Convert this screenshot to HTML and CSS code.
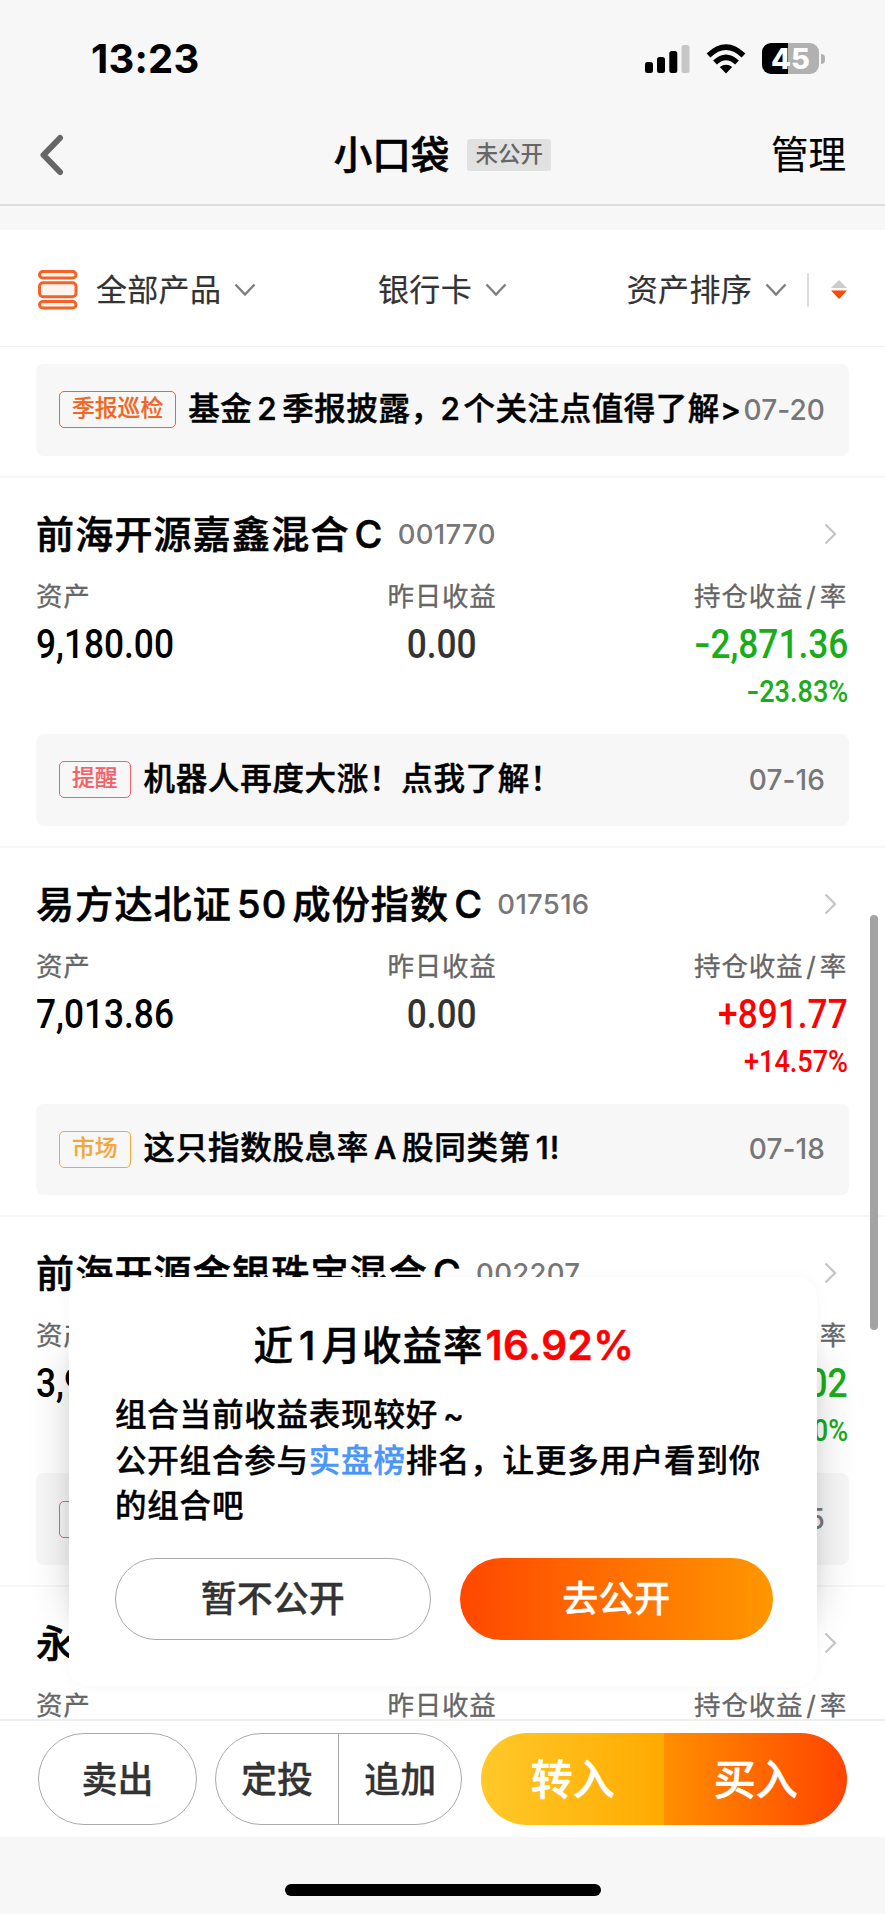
FILE: index.html
```html
<!DOCTYPE html>
<html lang="zh-CN">
<head>
<meta charset="utf-8">
<title>小口袋</title>
<link rel="stylesheet" href="styles.css">
</head>
<body>
<div class="screen">
  <header class="status">
    <span class="clock">13:23</span>
    <div class="status-icons">
      <svg class="signal" width="45" height="30" viewBox="0 0 45 30"><rect x="0" y="18" width="8" height="11" rx="2.5"/><rect x="12" y="13" width="8" height="16" rx="2.5"/><rect x="24.300" y="7" width="8" height="22" rx="2.5"/><rect x="36.500" y="1" width="8" height="28" rx="2.5" fill="#c6c6c6"/></svg>
      <svg class="wifi" width="40" height="30" viewBox="0 0 40 30" fill="none" stroke="#000"><path d="M2.500 11.500Q20-5.200 37.500 11.500" stroke-width="5.500"/><path d="M9 18.600Q20 8.200 31 18.600" stroke-width="5.500"/><path d="M20 29.500L13.800 22.900Q20 18.500 26.200 22.900Z" fill="#000" stroke="none"/></svg>
      <div class="battery"><span class="battery-text">45</span></div>
      <span class="battery-tip"></span>
    </div>
  </header>
  <nav class="nav">
    <svg class="back" width="24" height="42" viewBox="0 0 24 42"><path d="M21 4L4.500 21L21 38" fill="none" stroke="#666" stroke-width="6" stroke-linecap="round" stroke-linejoin="round"/></svg>
    <div class="nav-title"><span class="nav-name">小口袋</span><span class="nav-badge">未公开</span></div>
    <span class="manage">管理</span>
  </nav>
  <div class="filters">
    <div class="filter f-left">
      <svg width="40" height="40" viewBox="0 0 40 40" fill="#fff5ef" stroke="#f4622a" stroke-width="3"><rect x="1.500" y="1.500" width="36.500" height="6.500" rx="3.200"/><rect x="1.500" y="12.700" width="36.500" height="14" rx="3.500"/><rect x="1.500" y="31.500" width="36.500" height="6.500" rx="3.200"/></svg>
      <span>全部产品</span>
      <svg class="caret" width="22" height="14" viewBox="0 0 22 14"><path d="M1.500 1.500L11 11.500L20.500 1.500"/></svg>
    </div>
    <div class="filter f-mid">
      <span>银行卡</span>
      <svg class="caret" width="22" height="14" viewBox="0 0 22 14"><path d="M1.500 1.500L11 11.500L20.500 1.500"/></svg>
    </div>
    <div class="filter f-right">
      <span>资产排序</span>
      <svg class="caret" width="22" height="14" viewBox="0 0 22 14"><path d="M1.500 1.500L11 11.500L20.500 1.500"/></svg>
      <i class="bar"></i>
      <svg width="16" height="19" viewBox="0 0 16 19"><path d="M8 0L16 8H0Z" fill="#ccc"/><path d="M8 19L16 10.500H0Z" fill="#ff4800"/></svg>
    </div>
  </div>

  <main class="list">
    <section class="lead">
      <div class="notice"><span class="tag orange">季报巡检</span><p class="msg tight">基金<b class="n">2</b>季报披露，<b class="n first">2</b>个关注点值得了解&gt;</p><time>07-20</time></div>
    </section>

    <section class="fund">
      <div class="head"><h2>前海开源嘉鑫混合<b class="n end">C</b></h2><span class="code">001770</span><svg class="go" width="13" height="22" viewBox="0 0 13 22"><path d="M1.500 1.500L11 11L1.500 20.500"/></svg></div>
      <div class="cols">
        <div class="col"><label>资产</label><strong>9,180.00</strong></div>
        <div class="col c"><label>昨日收益</label><strong class="dim">0.00</strong></div>
        <div class="col r green"><label>持仓收益<i>/</i>率</label><strong><i>-</i>2,871.36</strong><em><i>-</i>23.83%</em></div>
      </div>
      <div class="notice"><span class="tag red">提醒</span><p class="msg">机器人再度大涨！点我了解！</p><time>07-16</time></div>
    </section>

    <section class="fund">
      <div class="head"><h2>易方达北证<b class="n">50</b>成份指数<b class="n end">C</b></h2><span class="code">017516</span><svg class="go" width="13" height="22" viewBox="0 0 13 22"><path d="M1.500 1.500L11 11L1.500 20.500"/></svg></div>
      <div class="cols">
        <div class="col"><label>资产</label><strong>7,013.86</strong></div>
        <div class="col c"><label>昨日收益</label><strong class="dim">0.00</strong></div>
        <div class="col r up"><label>持仓收益<i>/</i>率</label><strong>+891.77</strong><em>+14.57%</em></div>
      </div>
      <div class="notice"><span class="tag amber">市场</span><p class="msg">这只指数股息率<b class="n">A</b>股同类第<b class="n end">1</b>!</p><time>07-18</time></div>
    </section>

    <section class="fund">
      <div class="head"><h2>前海开源金银珠宝混合<b class="n end">C</b></h2><span class="code">002207</span><svg class="go" width="13" height="22" viewBox="0 0 13 22"><path d="M1.500 1.500L11 11L1.500 20.500"/></svg></div>
      <div class="cols">
        <div class="col"><label>资产</label><strong>3,9</strong></div>
        <div class="col c"></div>
        <div class="col r green"><label>率</label><strong>02</strong><em>0%</em></div>
      </div>
      <div class="notice"><span class="tag red blank"></span><p class="msg"></p><time>5</time></div>
    </section>

    <section class="fund">
      <div class="head"><h2>永</h2><svg class="go" width="13" height="22" viewBox="0 0 13 22"><path d="M1.500 1.500L11 11L1.500 20.500"/></svg></div>
      <div class="cols">
        <div class="col"><label>资产</label></div>
        <div class="col c"><label>昨日收益</label></div>
        <div class="col r"><label>持仓收益<i>/</i>率</label></div>
      </div>
    </section>
  </main>

  <footer class="actions">
    <button class="pill sell">卖出</button>
    <div class="pill pair"><button>定投</button><button>追加</button></div>
    <div class="pill trade"><button class="in">转入</button><button class="buy">买入</button></div>
  </footer>
  <div class="home"><i></i></div>

  <i class="scrollbar"></i>
  <i class="glow"></i>
  <aside class="dialog">
    <h3>近<b class="n">1</b>月收益率<span>16.92%</span></h3>
    <p>组合当前收益表现较好<b class="n end">~</b><br>公开组合参与<a>实盘榜</a>排名，让更多用户看到你的组合吧</p>
    <div class="choices"><button class="later">暂不公开</button><button class="open">去公开</button></div>
  </aside>
</div>
</body>
</html>
```
FILE: styles.css
```css
* { box-sizing: border-box; margin: 0; padding: 0; }
body { width: 885px; height: 1914px; overflow: hidden; background: #f7f7f7; font-family: Inter, "Noto Sans CJK SC", sans-serif; color: #000; }
button { border: 0; background: none; font: inherit; color: inherit; }
i, em { font-style: normal; }
.screen { position: relative; width: 885px; height: 1914px; display: flex; flex-direction: column; overflow: hidden; }

.status { height: 117px; flex: none; display: flex; justify-content: space-between; align-items: center; padding: 0 60px 0 91px; }
.clock { font-size: 40px; font-weight: 700; letter-spacing: .2px; }
.status-icons { display: flex; align-items: center; }
.wifi { margin-left: 16px; }
.battery { width: 57px; height: 31px; margin-left: 16px; border-radius: 9px; background: linear-gradient(90deg, #000 45%, #b1b1b1 45%); display: flex; align-items: center; justify-content: center; }
.battery-text { color: #fff; font-size: 29px; font-weight: 800; line-height: 31px; }
.battery-tip { width: 4px; height: 10px; margin-left: 2px; border-radius: 0 5px 5px 0; background: #b1b1b1; }

.nav { height: 89px; flex: none; display: grid; grid-template-columns: 150px 1fr 150px; align-items: center; padding: 0 39px 11px; border-bottom: 2px solid #dcdcdc; }
.nav-title { display: flex; justify-content: center; align-items: center; gap: 18px; }
.nav-name { font-size: 38.500px; font-weight: 500; line-height: 50px; -webkit-text-stroke: .6px; }
.nav-badge { width: 84px; height: 32px; border-radius: 3px; background: #e1e1e1; color: #666; font-size: 22.500px; font-weight: 500; line-height: 30px; text-align: center; }
.manage { justify-self: end; font-size: 37.500px; line-height: 50px; -webkit-text-stroke: .2px; }

.filters { flex: none; height: 117px; margin-top: 24px; background: #fff; border-bottom: 1px solid #f2f2f2; display: flex; padding: 3px 38px 0; align-items: center; justify-content: space-between; }
.filter { display: flex; align-items: center; font-size: 31px; color: #333; line-height: 40px; letter-spacing: .3px; }
.f-left span { margin-left: 18px; }
.f-mid { margin-left: 2px; }
.filter span { -webkit-text-stroke: .2px; }
.caret { margin-left: 13px; }
.caret path { fill: none; stroke: #808080; stroke-width: 2.500; }
.bar { width: 2px; height: 34px; background: #ddd; margin: 0 22px 0 20px; }

.list { flex: none; height: 1372px; overflow: hidden; background: #fff; }
.lead { height: 131px; padding: 17px 36px 0; border-bottom: 2px solid #f7f7f7; }
.notice { height: 91.500px; border-radius: 8px; background: #f7f7f7; display: flex; align-items: center; padding: 0 24px 0 23px; }
.tag { height: 37px; border: 1.500px solid; border-radius: 5px; padding: 0 12px; font-size: 22.800px; line-height: 32px; font-weight: 500; flex: none; -webkit-text-stroke: .2px; }
.orange { color: #f26522; }
.red { color: #f0616a; }
.amber { color: #f2a73b; }
.blank { width: 72px; }
.msg { margin-left: 13px; flex: 1; font-size: 31.500px; font-weight: 500; line-height: 44px; letter-spacing: .7px; white-space: nowrap; padding-bottom: 2px; -webkit-text-stroke: .5px; }
.msg.tight { letter-spacing: .55px; min-width: 0; margin-left: 12px; }
.notice time { font-size: 28px; font-weight: 500; color: #777; letter-spacing: .1px; white-space: nowrap; }
.n { font-weight: inherit; margin: 0 5px; }
.n.end { margin-right: 0; }
.n.first { margin-right: 3px; margin-left: -2px; }

.fund { height: 369.660px; padding: 31px 36px 0; border-bottom: 2px solid #f7f7f7; display: flex; flex-direction: column; }
.head { height: 50px; display: flex; align-items: center; }
.head h2 { font-size: 38px; font-weight: 500; letter-spacing: 1.200px; line-height: 50px; white-space: nowrap; -webkit-text-stroke: .6px; }
.code { margin-left: 14px; font-size: 27.500px; font-weight: 500; color: #777; letter-spacing: .3px; }
.go { margin-left: auto; margin-right: 12px; }
.go path { fill: none; stroke: #c4c4c4; stroke-width: 2.200; }
.cols { display: grid; grid-template-columns: 1fr 1fr 1fr; height: 175px; padding: 19px 1px 0 0; }
.col { display: flex; flex-direction: column; align-items: flex-start; }
.col.c { align-items: center; }
.col.r { align-items: flex-end; }
.col label { font-size: 26.500px; color: #666; line-height: 36px; letter-spacing: .8px; -webkit-text-stroke: .3px; }
.col.r label { margin-right: 1px; }
.col label i { margin: 0 3px; }
.col strong { font: 500 41px/48px Roboto, sans-serif; margin-top: 6px; transform: scaleX(.86); transform-origin: 0 50%; }
.col.c strong { transform-origin: 50% 50%; }
.col.r strong, .col.r em { transform-origin: 100% 50%; }
.col strong i, .col em i { display: inline-block; transform: scaleX(1.350); transform-origin: 100% 50%; }
.col .dim { color: #333; }
.col em { font: 500 31.500px/36px Roboto, sans-serif; margin-top: 6px; transform: scaleX(.86); }
.green strong, .green em { color: #1aad19; }
.up strong, .up em { color: #f00; }

.actions { flex: none; height: 118px; background: #fff; border-top: 2px solid #eee; display: flex; padding: 12px 38px 0; }
.pill { height: 92px; border-radius: 46px; display: flex; font-size: 36px; font-weight: 500; color: #333; overflow: hidden; }
.sell { width: 159px; border: 1.500px solid #aaa; justify-content: center; align-items: center; padding-bottom: 5px; -webkit-text-stroke: .3px; }
.pair { width: 248px; margin-left: 18px; border: 1.500px solid #aaa; }
.pair button { flex: 1; padding-bottom: 5px; -webkit-text-stroke: .3px; }
.pair button + button { border-left: 1px solid #aaa; }
.trade { width: 366px; margin-left: 19px; color: #fff; font-size: 42px; }
.trade button { flex: 1; padding-bottom: 6px; -webkit-text-stroke: .6px; }
.in { background: linear-gradient(90deg, #ffc929, #ffaa00); }
.buy { background: linear-gradient(90deg, #ff8f00, #ff4400); }
.home { flex: 1; display: flex; justify-content: center; padding-top: 47px; }
.home i { width: 316px; height: 12px; border-radius: 6px; background: #000; }

.scrollbar { position: absolute; left: 870px; top: 915px; width: 8px; height: 415px; border-radius: 4px; background: #a3a3a3; }

.glow { position: absolute; left: 75px; top: 1355px; width: 736px; height: 260px; border-radius: 20px; box-shadow: 0 0 46px rgba(0, 0, 0, .24); }
.dialog { position: absolute; left: 69px; top: 1277px; width: 748px; height: 409px; border-radius: 20px; background: #fff; box-shadow: 0 0 16px rgba(0, 0, 0, .03); padding: 43px 44px 0 46px; }
.dialog h3 { font-size: 39.500px; font-weight: 500; line-height: 52px; text-align: center; letter-spacing: 1px; -webkit-text-stroke: .5px; white-space: nowrap; }
.dialog h3 span { color: #f00; font-weight: 600; font-size: 40.500px; letter-spacing: .5px; margin-left: 2px; }
.dialog p { margin-top: 20px; font-size: 31.500px; font-weight: 500; line-height: 45.500px; letter-spacing: .8px; margin-right: -6px; -webkit-text-stroke: .4px; }
.dialog a { color: #4a96f8; }
.choices { display: flex; gap: 29px; margin-top: 29px; }
.choices button { flex: 1 1 0; height: 82px; border-radius: 41px; font-size: 36px; font-weight: 500; padding-bottom: 5px; -webkit-text-stroke: .3px; }
.later { border: 1.500px solid #aaa; color: #333; }
.choices .open { color: #fff; background: linear-gradient(90deg, #ff4800, #ff9700); }
```
